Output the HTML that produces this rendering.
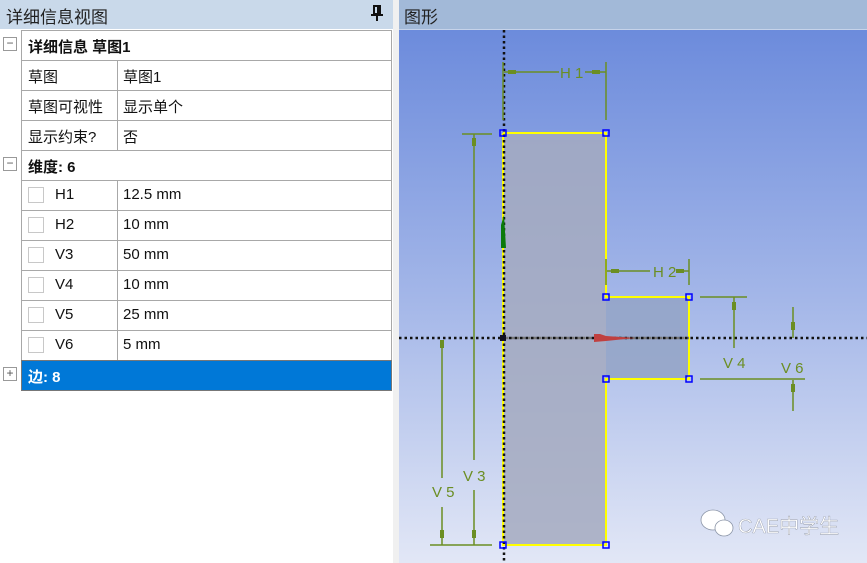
<!DOCTYPE html>
<html><head><meta charset="utf-8"><style>
*{margin:0;padding:0;box-sizing:border-box}
body{width:867px;height:563px;overflow:hidden;background:#fff;font-family:"Liberation Sans","Microsoft YaHei","Noto Sans CJK SC",sans-serif;position:relative}
.lt{position:absolute;left:0;top:0;width:393px;height:29px;background:#c9d9ea;font-size:17px;color:#222;padding:3px 0 0 6px;font-family:"Liberation Sans","Noto Sans CJK SC",sans-serif}
.pin{position:absolute;left:371px;top:5px}
.div{position:absolute;left:393px;top:0;width:6px;height:563px;background:#f0f0f0}
.row{position:absolute;left:21px;width:371px;height:31px;border:1px solid #a8a8a8;font-size:15px;color:#111;font-family:"Liberation Sans","Noto Sans CJK SC",sans-serif}
.row .a{position:absolute;left:6px;top:5px}
.row .b{position:absolute;left:95px;top:0;height:29px;border-left:1px solid #a8a8a8;padding:5px 0 0 5px}
.bold{font-weight:bold}
.cb{position:absolute;left:6px;top:6px;width:16px;height:16px;border:1px solid #c8c8c8;background:#fff}
.row .n{position:absolute;left:33px;top:5px}
.tg{position:absolute;left:3px;width:14px;height:14px;border:1px solid #999;background:#fff;font-size:12px;line-height:11px;text-align:center;color:#555}
.gh{position:absolute;left:399px;top:0;width:468px;height:29px;background:#a2b9d8;font-size:17px;padding:3px 0 0 5px;color:#222}
svg.g{position:absolute;left:399px;top:29px}
</style></head><body>
<div class="lt">详细信息视图</div>
<svg class="pin" width="12" height="16" viewBox="0 0 12 16"><rect x="3" y="1" width="6" height="8" fill="none" stroke="#111" stroke-width="2"/><rect x="6" y="1" width="3" height="8" fill="#111"/><rect x="0" y="9" width="12" height="2" fill="#111"/><rect x="5" y="11" width="2" height="5" fill="#111"/></svg>
<div class="div"></div>
<div class="tg" style="top:37px">−</div>
<div class="row bold" style="top:30px"><span class="a">详细信息 草图1</span></div>
<div class="row" style="top:60px"><span class="a">草图</span><span class="b">草图1</span></div>
<div class="row" style="top:90px"><span class="a">草图可视性</span><span class="b">显示单个</span></div>
<div class="row" style="top:120px"><span class="a">显示约束?</span><span class="b">否</span></div>
<div class="tg" style="top:157px">−</div>
<div class="row bold" style="top:150px"><span class="a">维度: 6</span></div>
<div class="row" style="top:180px"><span class="cb"></span><span class="n">H1</span><span class="b">12.5 mm</span></div>
<div class="row" style="top:210px"><span class="cb"></span><span class="n">H2</span><span class="b">10 mm</span></div>
<div class="row" style="top:240px"><span class="cb"></span><span class="n">V3</span><span class="b">50 mm</span></div>
<div class="row" style="top:270px"><span class="cb"></span><span class="n">V4</span><span class="b">10 mm</span></div>
<div class="row" style="top:300px"><span class="cb"></span><span class="n">V5</span><span class="b">25 mm</span></div>
<div class="row" style="top:330px"><span class="cb"></span><span class="n">V6</span><span class="b">5 mm</span></div>
<div class="tg" style="top:367px">+</div>
<div class="row bold" style="top:360px;background:#0078d7;color:#fff;border-color:#777"><span class="a">边: 8</span></div>
<div class="gh">图形</div>
<svg class="g" width="468" height="534" viewBox="399 29 468 534">
<defs><linearGradient id="g" x1="0" y1="0" x2="0" y2="1"><stop offset="0" stop-color="#6c8bdc"/><stop offset="0.5" stop-color="#a3b6e8"/><stop offset="1" stop-color="#e2e7f6"/></linearGradient></defs>
<rect x="399" y="29" width="468" height="534" fill="url(#g)"/>
<rect x="399" y="29" width="468" height="1" fill="#c6d3ea"/>
<rect x="503" y="133" width="103" height="412" fill="#a4aac0" fill-opacity="0.85"/>
<rect x="606" y="297" width="83" height="82" fill="#93a3c6" fill-opacity="0.85"/>
<g stroke="#ffff00" stroke-width="2" fill="none"><polyline points="503,133 606,133 606,297 689,297 689,379 606,379 606,545 503,545 503,133"/></g>
<line x1="504" y1="30" x2="504" y2="563" stroke="#111" stroke-width="2.5" stroke-dasharray="2.5,3"/>
<line x1="399" y1="338" x2="867" y2="338" stroke="#111" stroke-width="2.5" stroke-dasharray="2.5,3"/>
<line x1="506" y1="338" x2="689" y2="338" stroke="#777" stroke-width="2.5" stroke-dasharray="2.5,3"/>
<g stroke="#6b8e23" stroke-width="1.5" fill="none">
<line x1="503" y1="62" x2="503" y2="120"/><line x1="606" y1="62" x2="606" y2="120"/>
<line x1="504" y1="72" x2="559" y2="72"/><line x1="585" y1="72" x2="606" y2="72"/>
<line x1="462" y1="134" x2="492" y2="134"/><line x1="474" y1="134" x2="474" y2="460"/><line x1="474" y1="490" x2="474" y2="545"/>
<line x1="430" y1="545" x2="492" y2="545"/>
<line x1="442" y1="340" x2="442" y2="478"/><line x1="442" y1="507" x2="442" y2="545"/>
<line x1="606" y1="259" x2="606" y2="285"/><line x1="689" y1="259" x2="689" y2="285"/>
<line x1="607" y1="271" x2="650" y2="271"/><line x1="680" y1="271" x2="689" y2="271"/>
<line x1="700" y1="297" x2="747" y2="297"/><line x1="734" y1="297" x2="734" y2="348"/>
<line x1="700" y1="379" x2="805" y2="379"/>
<line x1="793" y1="307" x2="793" y2="338"/><line x1="793" y1="380" x2="793" y2="411"/>
</g>
<g fill="#6b8e23">
<rect x="508" y="70" width="8" height="4"/><rect x="592" y="70" width="8" height="4"/>
<rect x="472" y="138" width="4" height="8"/><rect x="472" y="530" width="4" height="8"/>
<rect x="440" y="340" width="4" height="8"/><rect x="440" y="530" width="4" height="8"/>
<rect x="611" y="269" width="8" height="4"/><rect x="676" y="269" width="8" height="4"/>
<rect x="732" y="302" width="4" height="8"/><rect x="791" y="322" width="4" height="8"/><rect x="791" y="384" width="4" height="8"/>
</g>
<g fill="#6b8e23" font-family="Liberation Sans,sans-serif" font-size="15">
<text x="560" y="78">H 1</text><text x="653" y="277">H 2</text>
<text x="463" y="481">V 3</text><text x="432" y="497">V 5</text>
<text x="723" y="368">V 4</text><text x="781" y="373">V 6</text>
</g>
<polygon points="501,248 501,225 504,215 506,248" fill="#0a7a0a"/>
<polygon points="594,334 600,334 606,336 635,338 606,341 594,342" fill="#c04040"/>
<g><rect x="500" y="130" width="6" height="6" fill="none" stroke="#00f" stroke-width="1.5"/>
<rect x="603" y="130" width="6" height="6" fill="none" stroke="#00f" stroke-width="1.5"/>
<rect x="603" y="294" width="6" height="6" fill="none" stroke="#00f" stroke-width="1.5"/>
<rect x="686" y="294" width="6" height="6" fill="none" stroke="#00f" stroke-width="1.5"/>
<rect x="603" y="376" width="6" height="6" fill="none" stroke="#00f" stroke-width="1.5"/>
<rect x="686" y="376" width="6" height="6" fill="none" stroke="#00f" stroke-width="1.5"/>
<rect x="500" y="542" width="6" height="6" fill="none" stroke="#00f" stroke-width="1.5"/>
<rect x="603" y="542" width="6" height="6" fill="none" stroke="#00f" stroke-width="1.5"/>
<rect x="500" y="335" width="6" height="6" fill="#112"/></g>
<g fill="#fff" stroke="#8c96a8" stroke-width="0.8"><ellipse cx="713" cy="520" rx="12" ry="10"/><ellipse cx="724" cy="528" rx="9" ry="8"/></g>
<text x="738" y="533" fill="#fff" stroke="#7a8090" stroke-width="0.3" font-size="20" font-family="Liberation Sans,Noto Sans CJK SC,sans-serif">CAE中学生</text>
</svg>
</body></html>
